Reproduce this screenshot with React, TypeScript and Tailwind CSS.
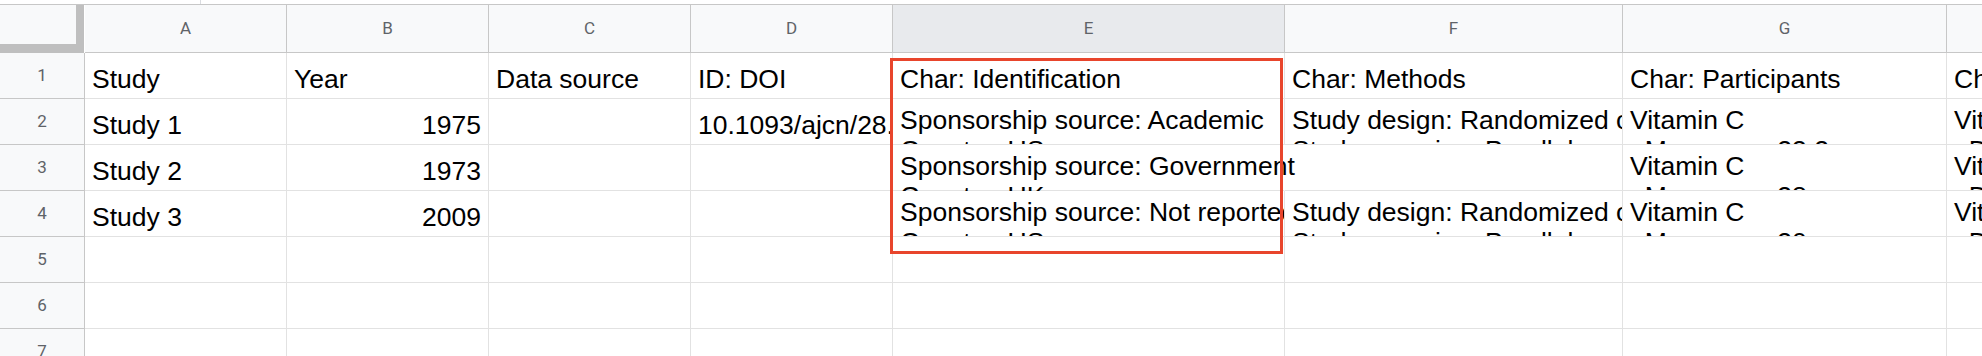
import React from "react";

type Col = { label: string; w: string; selected?: boolean };
type Cell = { text: string; right?: boolean; multi?: boolean; spill?: boolean };

const cols: Col[] = [
  { label: "A", w: "w-[202px]" },
  { label: "B", w: "w-[202px]" },
  { label: "C", w: "w-[202px]" },
  { label: "D", w: "w-[202px]" },
  { label: "E", w: "w-[392px]", selected: true },
  { label: "F", w: "w-[338px]" },
  { label: "G", w: "w-[324px]" },
  { label: "H", w: "w-[202px]" },
];

const blank: Cell = { text: "" };
const m = (text: string, spill = false): Cell => ({ text, multi: true, spill });

const rows: Cell[][] = [
  [
    { text: "Study" },
    { text: "Year" },
    { text: "Data source" },
    { text: "ID: DOI" },
    { text: "Char: Identification" },
    { text: "Char: Methods" },
    { text: "Char: Participants" },
    { text: "Char: Interventions" },
  ],
  [
    { text: "Study 1" },
    { text: "1975", right: true },
    blank,
    { text: "10.1093/ajcn/28.11.1250" },
    m("Sponsorship source: Academic\nCountry: US"),
    m("Study design: Randomized controlled trial\nStudy grouping: Parallel group"),
    m("Vitamin C\n  Mean age: 23.2"),
    m("Vitamin C\n  Dose: 1 g/day"),
  ],
  [
    { text: "Study 2" },
    { text: "1973", right: true },
    blank,
    blank,
    m("Sponsorship source: Government\nCountry: UK", true),
    blank,
    m("Vitamin C\n  Mean age: 38"),
    m("Vitamin C\n  Dose: 2 g/day"),
  ],
  [
    { text: "Study 3" },
    { text: "2009", right: true },
    blank,
    blank,
    m("Sponsorship source: Not reported\nCountry: US"),
    m("Study design: Randomized controlled trial\nStudy grouping: Parallel group"),
    m("Vitamin C\n  Mean age: 30"),
    m("Vitamin C\n  Dose: 1 g/day"),
  ],
  [blank, blank, blank, blank, blank, blank, blank, blank],
  [blank, blank, blank, blank, blank, blank, blank, blank],
  [blank, blank, blank, blank, blank, blank, blank, blank],
];

function GridCell({ cell, col }: { cell: Cell; col: Col }) {
  const base = `${col.w} shrink-0 h-full border-b border-[#e2e2e2] px-[7px] whitespace-pre leading-[30px]`;
  if (cell.multi) {
    return (
      <div
        className={`${base} pt-[6px] ${
          cell.spill ? "overflow-visible border-r border-r-transparent" : "overflow-hidden border-r border-r-[#e2e2e2]"
        }`}
      >
        {cell.text}
      </div>
    );
  }
  return (
    <div
      className={`${base} overflow-hidden border-r border-r-[#e2e2e2] flex items-end pb-[4px] ${
        cell.right ? "justify-end" : "justify-start"
      }`}
    >
      {cell.text}
    </div>
  );
}

export default function App() {
  return (
    <div className="relative w-[1982px] h-[356px] overflow-hidden bg-white font-['Liberation_Sans',Arial,sans-serif]">
      {/* formula bar remnant */}
      <div className="flex h-[5px] border-b border-[#c7c7c7]">
        <div className="w-[201px] border-r border-[#dadce0]" />
      </div>

      {/* column headers */}
      <div className="flex h-[48px] font-['Roboto',sans-serif] text-[17px] text-[#5f6368]">
        <div className="w-[85px] shrink-0 h-full border-r border-white bg-[#f8f9fa]">
          <div className="h-full border-r-[8px] border-b-[9px] border-[#bfbfbf]" />
        </div>
        {cols.map((c) => (
          <div
            key={c.label}
            className={`${c.w} shrink-0 h-full flex items-center justify-center border-r border-b border-[#c7c7c7] ${
              c.selected ? "bg-[#e8eaed]" : "bg-[#f8f9fa]"
            }`}
          >
            {c.label}
          </div>
        ))}
      </div>

      {/* rows */}
      {rows.map((row, i) => (
        <div key={i} className="flex h-[46px] overflow-hidden text-[26.5px] text-black">
          <div className="w-[85px] shrink-0 h-full flex items-center justify-center bg-[#f8f9fa] border-r border-b border-[#c7c7c7] font-['Roboto',sans-serif] text-[17px] text-[#5f6368]">
            {i + 1}
          </div>
          {row.map((cell, j) => (
            <GridCell key={j} cell={cell} col={cols[j]} />
          ))}
        </div>
      ))}

      {/* annotation box */}
      <div className="absolute left-[890px] top-[58px] w-[393px] h-[196px] border-[3px] border-[#e8452c] pointer-events-none" />
    </div>
  );
}
